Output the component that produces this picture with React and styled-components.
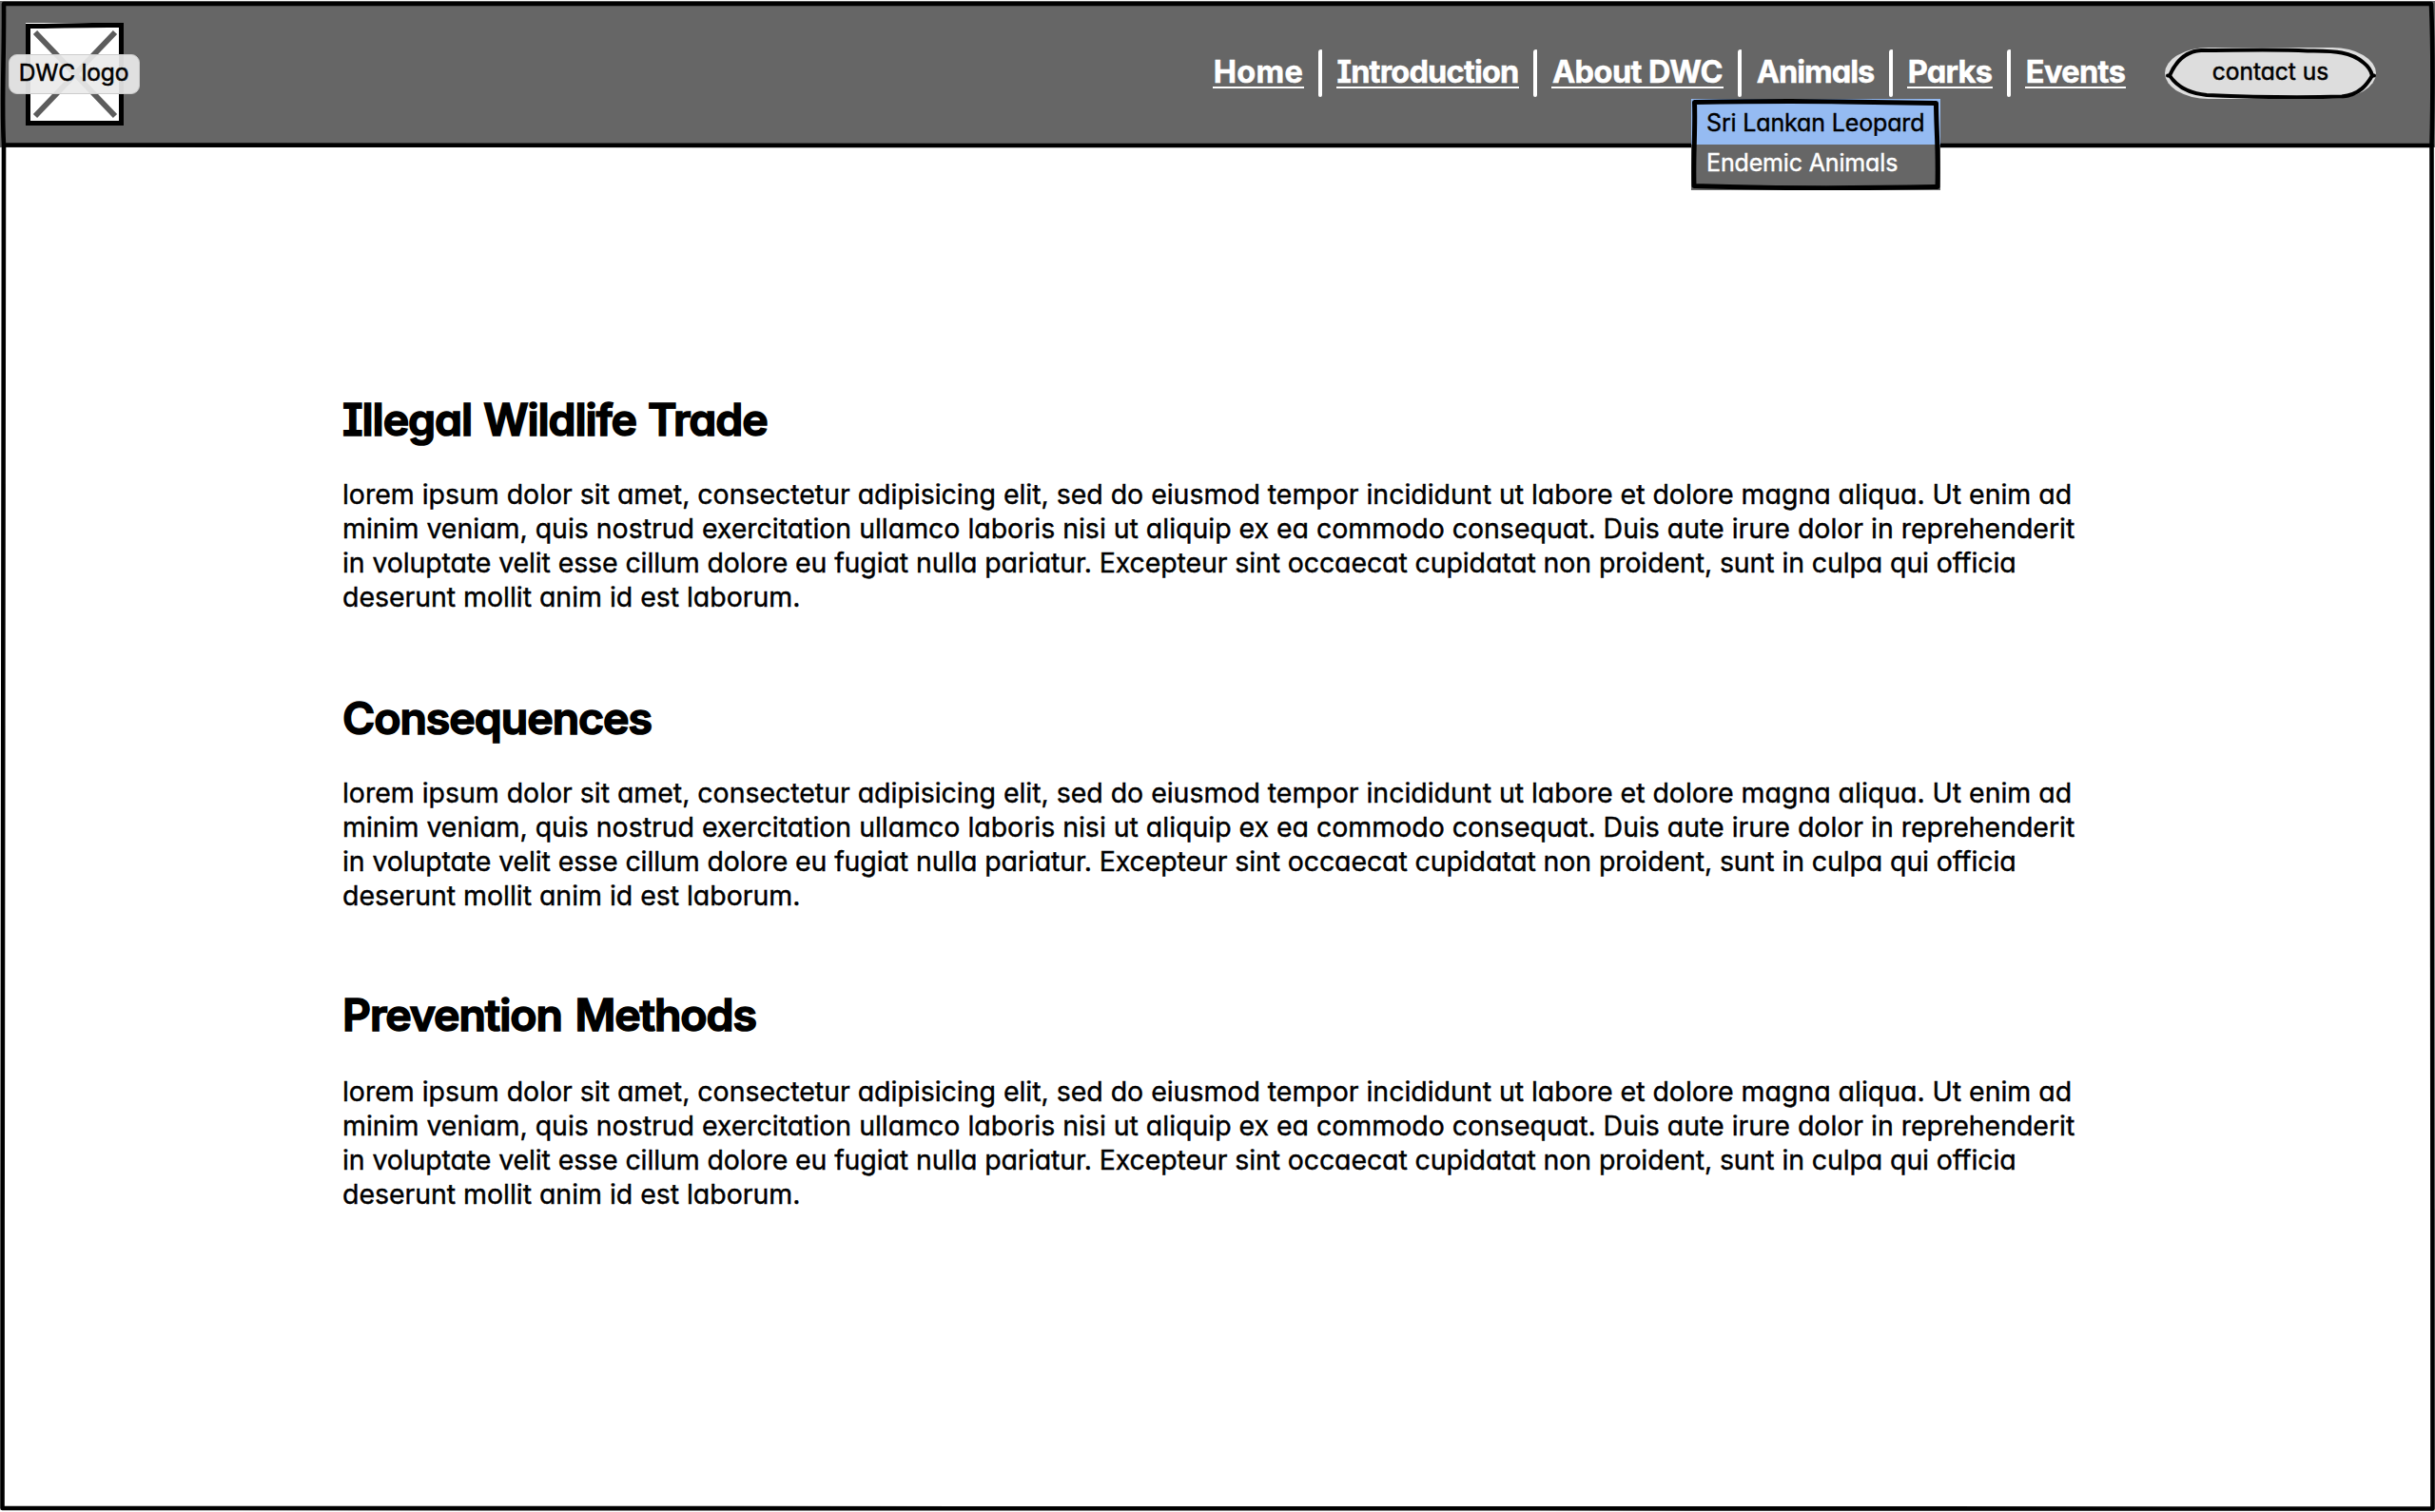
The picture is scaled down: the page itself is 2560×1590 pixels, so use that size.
import React from "react";
import styled, { createGlobalStyle } from "styled-components";

const GlobalStyle = createGlobalStyle`
  *, *::before, *::after { box-sizing: border-box; }
  body {
    margin: 0;
    background: #fff;
    color: #000;
    font-family: Inter, "Open Sans", sans-serif;
    font-feature-settings: "cv11", "cv08";
  }
`;

const Page = styled.div`
  position: relative;
  width: 2560px;
  height: 1590px;
  overflow: hidden;
  background: #fff;
`;

const Sketch = styled.svg`
  position: absolute;
  left: 0;
  top: 0;
  width: 100%;
  height: 100%;
  fill: none;
  stroke: #000;
  stroke-width: ${(p) => p.$weight || 4.6};
  stroke-linecap: round;
  stroke-linejoin: round;
  pointer-events: none;
`;

const Header = styled.header`
  display: flex;
  align-items: flex-start;
  justify-content: space-between;
  height: 155px;
  padding: 24px 62px 0 27px;
  background: linear-gradient(#fff 1px, #666 1px);
`;

const Logo = styled.div`
  position: relative;
  width: 103px;
  height: 108px;
  background: #fff;
`;

const LogoLabel = styled.span`
  position: absolute;
  left: -18px;
  top: 33px;
  display: flex;
  justify-content: center;
  width: 138px;
  height: 42px;
  padding-right: 1px;
  border: 1px solid #ccc;
  border-radius: 9px;
  background: rgba(234, 234, 234, 0.92);
  font-size: 24.5px;
  line-height: 36px;
  letter-spacing: -0.2px;
  white-space: nowrap;
  -webkit-text-stroke: 0.5px #000;
`;

const HeaderRight = styled.div`
  display: flex;
  align-items: flex-start;
  gap: 41px;
  padding-top: 26px;
`;

const Nav = styled.nav`
  display: flex;
  align-items: flex-start;
  gap: 15px;
  padding-top: 2px;
`;

const NavItem = styled.div`
  position: relative;
  margin-top: 7px;
`;

const NavLink = styled.a`
  display: block;
  width: ${(p) => p.$width}px;
  height: 34px;
  border-bottom: 2px solid ${(p) => (p.$open ? "transparent" : "#fff")};
  color: #fff;
  font-size: 32.5px;
  font-weight: 700;
  line-height: 34px;
  letter-spacing: ${(p) => p.$track}px;
  text-align: center;
  white-space: nowrap;
  text-decoration: none;
  -webkit-text-stroke: 0.5px #fff;
`;

const Separator = styled.span`
  width: 4px;
  height: 50px;
  border-radius: 3px 1px 2px 2px;
  background: #fff;
`;

const Menu = styled.div`
  position: absolute;
  left: -68px;
  top: 45px;
  z-index: 2;
  width: 262px;
  height: 96px;
  background: #666;
`;

const MenuRow = styled.div`
  height: 48px;
  padding: ${(p) => (p.$active ? 10 : 4)}px 0 0 16px;
  background: ${(p) => (p.$active ? "#95bbf2" : "#666")};
  color: ${(p) => (p.$active ? "#000" : "#fff")};
  font-size: 25px;
  line-height: 30px;
  letter-spacing: -0.15px;
  white-space: nowrap;
  -webkit-text-stroke: 0.4px currentColor;
`;

const ContactButton = styled.button`
  position: relative;
  width: 222px;
  height: 54px;
  padding: 0 0 4px;
  border: 0;
  border-radius: 46px / 27px;
  background: #ddd;
  color: #000;
  font: inherit;
  font-feature-settings: inherit;
  font-size: 24.5px;
  line-height: 48px;
  letter-spacing: 0;
  -webkit-text-stroke: 0.5px #000;
`;

const Main = styled.main`
  padding: 258px 0 0 360px;
`;

const Section = styled.section`
  margin-bottom: ${(p) => p.$after}px;
`;

const Heading = styled.h2`
  margin: 0 0 ${(p) => p.$gap}px;
  font-size: 46.5px;
  font-weight: 600;
  line-height: 56px;
  letter-spacing: ${(p) => p.$track}px;
  word-spacing: ${(p) => p.$words}px;
  white-space: nowrap;
  -webkit-text-stroke: 1.6px #000;
`;

const Paragraph = styled.p`
  margin: 0;
  font-size: 28.5px;
  line-height: 36px;
  -webkit-text-stroke: 0.4px #000;
`;

const Line = styled.span`
  display: block;
  letter-spacing: ${(p) => p.$track}px;
  white-space: nowrap;
`;

const links = [
  { label: "Home", width: 96, track: 0.3 },
  { label: "Introduction", width: 192, track: -0.8 },
  { label: "About DWC", width: 181, track: -0.55 },
  { label: "Animals", width: 125, track: -1 },
  { label: "Parks", width: 90, track: -0.7 },
  { label: "Events", width: 106, track: -0.6 },
];
const openLabel = "Animals";

const lines = [
  ["lorem ipsum dolor sit amet, consectetur adipisicing elit, sed do eiusmod tempor incididunt ut labore et dolore magna aliqua. Ut enim ad", -0.032],
  ["minim veniam, quis nostrud exercitation ullamco laboris nisi ut aliquip ex ea commodo consequat. Duis aute irure dolor in reprehenderit", -0.028],
  ["in voluptate velit esse cillum dolore eu fugiat nulla pariatur. Excepteur sint occaecat cupidatat non proident, sunt in culpa qui officia", -0.117],
  ["deserunt mollit anim id est laborum.", -0.04],
];

const sections = [
  { title: "Illegal Wildlife Trade", track: -1.1, words: 1.5, gap: 33, after: 81 },
  { title: "Consequences", track: -1.05, words: 0, gap: 33, after: 79 },
  { title: "Prevention Methods", track: -1.1, words: 3, gap: 35, after: 0 },
];

function AnimalsMenu() {
  return (
    <Menu>
      <MenuRow $active>Sri Lankan Leopard</MenuRow>
      <MenuRow>Endemic Animals</MenuRow>
      <Sketch viewBox="0 0 262 96" $weight={5}>
        <path d="M3.5 3.5C60 2.5 110 2 160 3C200 3.8 230 4 257.500 4.500C257.500 30 260 50 259 92.500C180 94 100 94 40 92.500L3 91.500C2 60 4.500 35 3.500 3.500Z" />
      </Sketch>
    </Menu>
  );
}

export default function App() {
  return (
    <Page>
      <GlobalStyle />
      <Header>
        <Logo>
          <Sketch viewBox="0 0 103 108" $weight={5}>
            <path d="M10 10L94 98M94 10L10 98" stroke="#5c5c5c" strokeWidth="5.8" strokeLinecap="butt" />
            <path d="M2.500 3.500C35 3.500 60 2 100.500 2.500V105.500H2.500Z" strokeLinejoin="miter" />
          </Sketch>
          <LogoLabel>DWC logo</LogoLabel>
        </Logo>
        <HeaderRight>
          <Nav>
            {links.map((link, i) => (
              <React.Fragment key={link.label}>
                {i > 0 && <Separator />}
                <NavItem>
                  <NavLink $width={link.width} $track={link.track} $open={link.label === openLabel}>
                    {link.label}
                  </NavLink>
                  {link.label === openLabel && <AnimalsMenu />}
                </NavItem>
              </React.Fragment>
            ))}
          </Nav>
          <ContactButton>
            contact us
            <Sketch viewBox="0 0 222 54" $weight={4}>
              <path d="M3 29.500H5C10 18 20 4 38 3C75 3 115 1.500 150 3.500C175 4 194 3 209 16C214 20 217 25 218 29.500H220" />
              <path d="M5 29.500C12 40 24 48 44 50C90 52 140 53 186 51.500C205 50 213 38 218 29.500" />
            </Sketch>
          </ContactButton>
        </HeaderRight>
      </Header>
      <Main>
        {sections.map((s) => (
          <Section key={s.title} $after={s.after}>
            <Heading $track={s.track} $words={s.words} $gap={s.gap}>{s.title}</Heading>
            <Paragraph>
              {lines.map(([text, track]) => (
                <Line key={text} $track={track}>{text}</Line>
              ))}
            </Paragraph>
          </Section>
        ))}
      </Main>
      <Sketch viewBox="0 0 2560 1590" $weight={4.6}>
        <path d="M4 4C600 3.500 1500 3.200 2556 4C2557.500 40 2557.500 110 2556.500 153C1900 153.200 1400 153 1000 153C600 153.300 300 153 4 152.500C1.500 110 4.500 60 4 4Z" />
        <path d="M4 153C3.500 600 2.500 1100 2.500 1586C900 1585 1700 1587 2557.500 1586.500C2557 1100 2558.500 600 2556.500 153" />
      </Sketch>
    </Page>
  );
}
